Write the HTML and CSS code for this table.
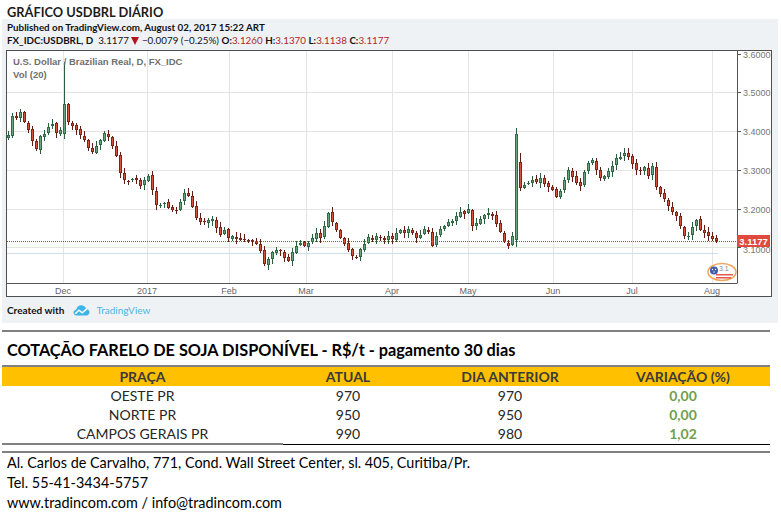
FILE: index.html
```html
<!DOCTYPE html>
<html lang="pt">
<head>
<meta charset="utf-8">
<title>Gráfico USDBRL Diário</title>
<link rel="stylesheet" href="styles.css">
</head>
<body>
<main class="page">
  <h1 class="page-title">GRÁFICO USDBRL DIÁRIO</h1>
  <section class="tv-panel">
    <p class="tv-pub">Published on TradingView.com, August 02, 2017 15:22 ART</p>
    <p class="tv-quote"><b>FX_IDC:USDBRL, D</b>&nbsp; <span>3.1177</span> <i class="tri"></i> <span>−0.0079 (−0.25%)</span> <b>O:</b><em>3.1260</em> <b>H:</b><em>3.1370</em> <b>L:</b><em>3.1138</em> <b>C:</b><em>3.1177</em></p>
    <div class="tv-chart">
      <svg class="chart-svg" viewBox="7 51 764 245" width="764" height="245">
        <g class="grid">
          <line x1="63.5" y1="51" x2="63.5" y2="283"/>
          <line x1="147.5" y1="51" x2="147.5" y2="283"/>
          <line x1="229.5" y1="51" x2="229.5" y2="283"/>
          <line x1="306.5" y1="51" x2="306.5" y2="283"/>
          <line x1="392.5" y1="51" x2="392.5" y2="283"/>
          <line x1="468.5" y1="51" x2="468.5" y2="283"/>
          <line x1="553.5" y1="51" x2="553.5" y2="283"/>
          <line x1="632.5" y1="51" x2="632.5" y2="283"/>
          <line x1="712.5" y1="51" x2="712.5" y2="283"/>
          <line x1="7" y1="92.5" x2="737" y2="92.5"/>
          <line x1="7" y1="131.5" x2="737" y2="131.5"/>
          <line x1="7" y1="170.5" x2="737" y2="170.5"/>
          <line x1="7" y1="209.5" x2="737" y2="209.5"/>
          <line x1="7" y1="247.5" x2="737" y2="247.5"/>
        </g>
        <line class="vol-line" x1="7" y1="253.5" x2="718" y2="253.5"/>
        <g id="candles" class="candles"></g>
        <line class="last-line" x1="7" y1="241.5" x2="737" y2="241.5"/>
        <g class="axis">
          <line x1="737.5" y1="51" x2="737.5" y2="283"/>
          <line x1="7" y1="283.5" x2="737.5" y2="283.5"/>
          <line x1="737" y1="54.5" x2="741" y2="54.5"/>
          <line x1="737" y1="92.5" x2="741" y2="92.5"/>
          <line x1="737" y1="131.5" x2="741" y2="131.5"/>
          <line x1="737" y1="170.5" x2="741" y2="170.5"/>
          <line x1="737" y1="209.5" x2="741" y2="209.5"/>
          <line x1="737" y1="247.5" x2="741" y2="247.5"/>
        </g>
        <g class="price-labels">
          <text x="743" y="58">3.6000</text>
          <text x="743" y="96">3.5000</text>
          <text x="743" y="135">3.4000</text>
          <text x="743" y="174">3.3000</text>
          <text x="743" y="213">3.2000</text>
          <text x="743" y="253">3.1000</text>
        </g>
        <rect class="last-box" x="737" y="235" width="33" height="12"/>
        <text class="last-text" x="753.5" y="244.5">3.1177</text>
        <g class="time-labels">
          <text x="63" y="294">Dec</text>
          <text x="147" y="294">2017</text>
          <text x="229" y="294">Feb</text>
          <text x="306" y="294">Mar</text>
          <text x="392" y="294">Apr</text>
          <text x="468" y="294">May</text>
          <text x="553" y="294">Jun</text>
          <text x="632" y="294">Jul</text>
          <text x="712" y="294">Aug</text>
        </g>
        <text class="legend" x="13" y="65">U.S. Dollar / Brazilian Real, D, FX_IDC</text>
        <text class="legend legend-vol" x="13" y="78">Vol (20)</text>
        <g class="badge">
          <ellipse class="badge-ring" cx="722" cy="272" rx="14" ry="8.5"/>
          <rect class="badge-red" x="716" y="274" width="17" height="1.5"/>
          <rect class="badge-red" x="716" y="277" width="15" height="1.5"/>
          <circle class="badge-blue" cx="714" cy="270.5" r="4"/>
          <circle class="badge-star" cx="712.5" cy="269.5" r="0.7"/>
          <circle class="badge-star" cx="715.5" cy="269.5" r="0.7"/>
          <circle class="badge-star" cx="714" cy="272" r="0.7"/>
          <text class="badge-text" x="719" y="271">3.1</text>
        </g>
      </svg>
    </div>
    <p class="tv-credit"><b>Created with</b>
      <svg class="tv-logo" viewBox="0 0 17 12" width="17" height="12">
        <path class="tv-logo-cloud" d="M3.5 11.5C1.6 11.5 0.5 10.1 0.5 8.6C0.5 7.1 1.6 5.9 3.1 5.7C3.7 3.1 5.7 1.2 8.3 1.2C10.6 1.2 12.5 2.7 13.1 4.7C15.1 4.9 16.5 6.4 16.5 8.2C16.5 10.1 15 11.5 13.2 11.5Z"/>
        <path class="tv-logo-line" d="M2.2 9.8L6 6.2L9.2 8.8L14 4.6"/>
      </svg>
      <span class="tv-brand">TradingView</span></p>
  </section>
  <div class="rule"></div>
  <h2 class="table-title">COTAÇÃO FARELO DE SOJA DISPONÍVEL - R$/t - pagamento 30 dias</h2>
  <div class="quote-table">
    <div class="qt-row qt-head"><span>PRAÇA</span><span>ATUAL</span><span>DIA ANTERIOR</span><span>VARIAÇÃO (%)</span></div>
    <div class="qt-row"><span>OESTE PR</span><span>970</span><span>970</span><span class="var">0,00</span></div>
    <div class="qt-row"><span>NORTE PR</span><span>950</span><span>950</span><span class="var">0,00</span></div>
    <div class="qt-row qt-last"><span>CAMPOS GERAIS PR</span><span>990</span><span>980</span><span class="var">1,02</span></div>
  </div>
  <div class="rule rule-bottom"></div>
  <address class="contact">
    <span>Al. Carlos de Carvalho, 771, Cond. Wall Street Center, sl. 405, Curitiba/Pr.</span>
    <span>Tel. 55-41-3434-5757</span>
    <span>www.tradincom.com / info@tradincom.com</span>
  </address>
</main>
<script src="script.js"></script>
</body>
</html>
```

FILE: styles.css
```css
* { box-sizing: border-box; }
html, body { margin: 0; padding: 0; }
body {
  width: 781px;
  height: 521px;
  overflow: hidden;
  background: #fff;
  color: #000;
  font-family: Lato, "Open Sans", sans-serif;
}
.page { display: flex; flex-direction: column; }

.page-title {
  margin: 0;
  height: 19px;
  padding-left: 7px;
  font-size: 12.8px;
  line-height: 24px;
  font-weight: 700;
  color: #1c1c1c;
  white-space: nowrap;
}

.tv-panel {
  margin-left: 2px;
  width: 776px;
  height: 304px;
  background: #eff2f5;
  padding: 2px 0 0 4px;
  display: flex;
  flex-direction: column;
}
.tv-pub, .tv-quote {
  margin: 0;
  padding-left: 1px;
  height: 13px;
  line-height: 13px;
  font-size: 10px;
  white-space: nowrap;
  color: #111;
}
.tv-pub { font-weight: 700; font-size: 9.8px; }
.tv-quote { font-size: 9.8px; }
.tv-quote b { font-weight: 700; }
.tv-quote em { font-style: normal; color: #b3242a; }
.tri {
  display: inline-block;
  width: 0;
  height: 0;
  border-left: 4px solid transparent;
  border-right: 4px solid transparent;
  border-top: 8px solid #b3141c;
  vertical-align: -1px;
}

.tv-chart {
  margin-top: 3px;
  width: 766px;
  height: 247px;
  border: 1px solid #4f4f4f;
  background: #fff;
}
.chart-svg { display: block; }
.grid line { stroke: #e4e4e4; stroke-width: 1; }
.vol-line { stroke: #cfe0ea; stroke-width: 1; }
.last-line { stroke: #d23b2e; stroke-width: 1; stroke-dasharray: 1 1; }
.axis line { stroke: #555; stroke-width: 1; }
.candles { shape-rendering: crispEdges; }
.wick { stroke-width: 1; }
.wick.up { stroke: #2a5d3d; }
.wick.down { stroke: #5e1c14; }
.body-edge.up { fill: #2f6b47; }
.body-edge.down { fill: #7b261b; }
.body-fill.up { fill: #6ba583; }
.body-fill.down { fill: #d75442; }

.chart-svg text { font-family: "Liberation Sans", Arial, sans-serif; }
.price-labels text { font-size: 9px; fill: #777; }
.time-labels text { font-size: 9px; fill: #666; text-anchor: middle; }
.last-box { fill: #df4a3c; }
.last-text { font-size: 9.5px; fill: #fff; text-anchor: middle; font-weight: 700; }
.legend { font-size: 9.5px; fill: #707070; font-weight: 700; }
.badge-ring { fill: #fff; stroke: #f0a55c; stroke-width: 1.5; }
.badge-red { fill: #e4584c; }
.badge-blue { fill: #3b5ca6; }
.badge-star { fill: #fff; }
.badge-text { font-size: 7px; fill: #888; }

.tv-credit {
  margin: 0;
  height: 26px;
  padding-left: 1px;
  display: flex;
  align-items: center;
  font-size: 10px;
  color: #111;
}
.tv-credit b { font-weight: 700; }
.tv-logo { margin-left: 9px; }
.tv-logo-cloud { fill: #3fb4e6; }
.tv-logo-line { fill: none; stroke: #fff; stroke-width: 1.4; }
.tv-brand { margin-left: 6px; color: #4db5e2; }

.rule {
  margin: 7px 0 0 2px;
  width: 768px;
  height: 2px;
  background: #808080;
}
.rule-bottom { margin-top: 8px; }

.table-title {
  margin: 0;
  height: 33px;
  padding: 4px 0 0 7px;
  font-size: 16.3px;
  line-height: 27px;
  font-weight: 700;
  white-space: nowrap;
}

.quote-table { margin-left: 2px; width: 768px; }
.qt-row {
  display: grid;
  grid-template-columns: 281px 125px 204px 158px;
  height: 19px;
  line-height: 19px;
  font-size: 14px;
  text-align: center;
  color: #262626;
}
.qt-row > span:nth-child(2) { padding-left: 5px; }
.qt-row > span:nth-child(4) { padding-right: 16px; }
.qt-head {
  height: 21px;
  border-top: 2px solid #808080;
  background: #ffc000;
  font-weight: 700;
  color: #3b3b3b;
}
.qt-last > span { border-bottom: 1px solid #000; }
.qt-last > span:first-child { border-bottom: 2px solid #808080; }
.var { color: #6f9f4c; font-weight: 700; }

.contact {
  display: flex;
  flex-direction: column;
  padding-left: 7px;
  font-style: normal;
  font-size: 14.4px;
  line-height: 20px;
  white-space: nowrap;
}
```

FILE: script.js
```js
(function () {
  var C = [135,116,118,112,122,130,141,149,136,134,
    127,124,133,130,104,122,126,130,135,140,
    148,152,146,140,133,137,146,156,173,180,
    181,179,180,186,180,176,190,205,205,203,
    208,210,210,202,193,196,207,218,222,222,
    220,219,228,235,230,238,236,239,240,240,
    241,241,244,251,264,259,252,250,251,258,
    261,252,246,243,246,243,238,233,238,226,
    213,222,230,238,244,250,256,258,249,244,
    237,240,236,238,240,236,239,233,230,233,
    229,233,238,235,229,232,246,236,229,226,
    222,221,216,212,214,209,226,223,219,215,
    213,216,224,232,242,246,236,134,188,185,
    183,180,182,178,184,187,190,197,191,180,
    170,177,183,186,172,163,160,170,178,176,
    171,166,158,157,153,157,164,170,171,167,
    176,166,187,194,199,206,212,216,226,236,
    236,227,220,230,233,236,239,241];
  var OV = { 14: { o: 134, h: 62 }, 127: { o: 240, h: 128, l: 247 }, 128: { o: 162, h: 153 } };
  var seed = 20170802;
  function rnd() { seed = (seed * 16807) % 2147483647; return seed / 2147483647; }
  var NS = 'http://www.w3.org/2000/svg';
  var g = document.getElementById('candles');
  function el(tag, attrs) {
    var e = document.createElementNS(NS, tag);
    for (var k in attrs) e.setAttribute(k, attrs[k]);
    return e;
  }
  var prev = 137;
  for (var i = 0; i < C.length; i++) {
    var x = 8 + 4 * i;
    var c = C[i];
    var ov = OV[i] || {};
    var o = ov.o !== undefined ? ov.o : Math.round(prev + (rnd() - 0.5) * 3);
    var top = Math.min(o, c), bot = Math.max(o, c);
    var hi = ov.h !== undefined ? ov.h : Math.round(top - 0.5 - rnd() * 5);
    var lo = ov.l !== undefined ? ov.l : Math.round(bot + 0.5 + rnd() * 5);
    var cls = c < o ? 'up' : 'down';
    g.appendChild(el('line', { x1: x + 0.5, x2: x + 0.5, y1: hi, y2: lo, 'class': 'wick ' + cls }));
    var h = Math.max(1, bot - top);
    g.appendChild(el('rect', { x: x - 1, y: top, width: 3, height: h, 'class': 'body-edge ' + cls }));
    if (h > 2) g.appendChild(el('rect', { x: x, y: top + 1, width: 1, height: h - 2, 'class': 'body-fill ' + cls }));
    prev = c;
  }
})();
```
